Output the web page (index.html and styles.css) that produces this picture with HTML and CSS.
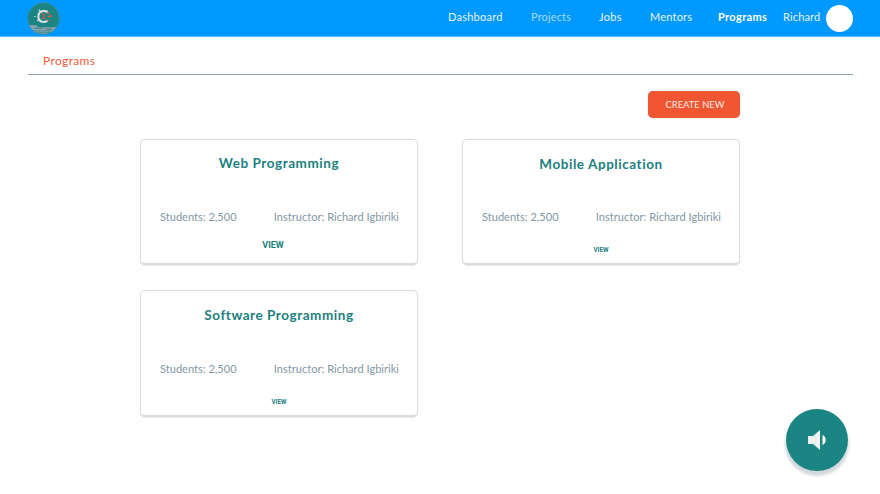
FILE: index.html
```html
<!DOCTYPE html>
<html lang="en">
<head>
<meta charset="utf-8">
<title>Programs</title>
<link rel="stylesheet" href="styles.css">
</head>
<body>
<header class="topbar">
  <svg class="logo" viewBox="0 0 32 32" aria-hidden="true">
    <circle cx="16" cy="16" r="15.5" fill="#1b8584"/>
    <path d="M2 22.500H9l2 2h15l3-1A15.5 15.5 0 0 1 2 22.500Z" fill="#8ba1ad"/>
    <circle cx="16" cy="16" r="15.2" fill="none" stroke="#71929c" stroke-width=".8" stroke-dasharray="1 1"/>
    <path d="M19.500 10C17 7.500 11 8.500 11 14S16 20.500 20 18" fill="none" stroke="#d9dde2" stroke-width="2"/>
    <path d="M11.500 7.500l3 3M19.500 8v3M10 18.500l2-2" fill="none" stroke="#d9dde2" stroke-width="1.200"/>
    <path d="M14.500 12h2v4h-2M19 10.500h3M20 14h3M19 17.500h2M23 12v3" fill="none" stroke="#e2583c" stroke-width="1.200"/>
    <path d="M7 14h1.500" stroke="#c5d0d7"/>
    <path d="M7 25.500h8M19 26.500h5" stroke="#1b8584" stroke-width=".8"/>
    <path d="M8 28h16M11 29.500h11" stroke="#1b8584" stroke-width="1" stroke-dasharray="1 1"/>
    <path d="M17 25.500h6" stroke="#9a6b62" stroke-width=".7" stroke-dasharray="1 1"/>
  </svg>
  <nav class="nav">
    <a class="dashboard">Dashboard</a>
    <a class="projects">Projects</a>
    <a class="jobs">Jobs</a>
    <a class="mentors">Mentors</a>
    <a class="active">Programs</a>
    <a class="user">Richard</a>
  </nav>
  <span class="avatar"></span>
</header>
<div class="page-title"><h1>Programs</h1></div>
<main class="content">
  <div class="toolbar"><button class="create">CREATE NEW</button></div>
  <section class="cards">
    <article class="card web">
      <h2>Web Programming</h2>
      <div class="meta"><span class="students">Students: 2,500</span><span class="instructor">Instructor: Richard Igbiriki</span></div>
      <a class="view hovered">VIEW</a>
    </article>
    <article class="card mobile">
      <h2>Mobile Application</h2>
      <div class="meta"><span class="students">Students: 2,500</span><span class="instructor">Instructor: Richard Igbiriki</span></div>
      <a class="view">VIEW</a>
    </article>
    <article class="card software">
      <h2>Software Programming</h2>
      <div class="meta"><span class="students">Students: 2,500</span><span class="instructor">Instructor: Richard Igbiriki</span></div>
      <a class="view">VIEW</a>
    </article>
  </section>
</main>
<button class="sound" aria-label="Sound">
  <svg viewBox="0 0 20 22" width="20" height="22"><path d="M1 7h5l7-6v20l-7-6H1Z" fill="#edf1f2"/><path d="M15.500 6a5.500 5.500 0 0 1 0 10Z" fill="#fff"/></svg>
</button>
</body>
</html>
```

FILE: styles.css
```css
* { box-sizing: border-box; }
body {
  margin: 0;
  height: 494px;
  overflow: hidden;
  background: #fff;
  font-family: Lato, "Liberation Sans", sans-serif;
  font-size: 11px;
}
.topbar {
  display: flex;
  height: 37px;
  padding: 0 27px;
  background: #0099ff;
  border-bottom: 1px solid #55bbff;
}
.logo { width: 33px; height: 33px; margin-top: 2px; }
.nav {
  display: grid;
  grid-template-columns: 83px 68px 51px 68px 65px 43px;
  margin-left: auto;
  color: #e8f4fc;
  line-height: 34px;
  white-space: nowrap;
}
.dashboard { letter-spacing: .25px; }
.projects { color: #a6daff; letter-spacing: .15px; }
.jobs { letter-spacing: .3px; }
.mentors { letter-spacing: .2px; }
.active { color: #fff; font-weight: 700; letter-spacing: .35px; }
.user { letter-spacing: .15px; }
.avatar { width: 27px; height: 27px; margin-top: 5px; border-radius: 50%; background: #fff; }
.page-title {
  height: 38px;
  margin: 0 27px 0 28px;
  padding-left: 15px;
  border-bottom: 1px solid #8ba1ad;
}
h1 { margin: 0; font-size: 12px; font-weight: 400; line-height: 47px; letter-spacing: .35px; color: #f05a38; }
.content { width: 600px; margin-left: 140px; }
.toolbar { display: flex; justify-content: flex-end; padding-top: 16px; }
.create {
  width: 92px;
  height: 27px;
  padding: 0 0 0 2px;
  border: 0;
  border-radius: 5px;
  background: #f15632;
  box-shadow: 0 0 1px #8ba1ad;
  color: #fbe9e3;
  font: 9.4px Lato, sans-serif;
}
.cards { display: grid; grid-template-columns: 278px 278px; gap: 26px 44px; margin-top: 21px; }
.card {
  display: flex;
  flex-direction: column;
  height: 126px;
  border: 1px solid #d9dce0;
  border-bottom-width: 2px;
  border-radius: 5px;
  box-shadow: 0 0 1px 0 #e0e3e5, 0 1px 1px #e8eaec;
}
.software { height: 127px; margin-top: -1px; }
h2 { margin: 13px 0 0; text-align: center; font-size: 13.5px; line-height: 20px; font-weight: 700; letter-spacing: .55px; color: #1b7f80; }
.mobile h2 { margin-top: 14px; }
.software h2 { margin-top: 14px; }
.meta { display: flex; justify-content: space-between; margin: 36px 18px 0 19px; line-height: 16px; letter-spacing: .03px; color: #8197a5; white-space: nowrap; }
.mobile .meta { margin-top: 35px; }
.view { align-self: center; margin-top: 19px; font: 700 6.3px/12px Roboto, sans-serif; color: #1b7f80; }
.view.hovered { margin: 14px 12px 0 0; font-size: 9px; }
.sound {
  position: absolute;
  left: 786px;
  top: 409px;
  width: 62px;
  height: 62px;
  padding: 0;
  border: 0;
  border-radius: 50%;
  background: #1b8584;
  box-shadow: 0 4px 3px 1px #d3d8dc;
}
.sound svg { display: block; margin: 0 auto; }
```
